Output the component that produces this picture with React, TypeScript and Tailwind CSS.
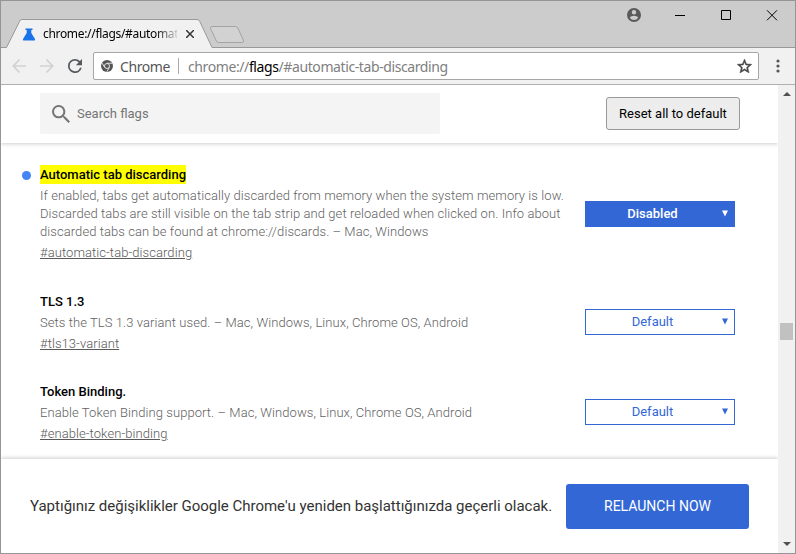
import React from "react";

type Flag = {
  title: string;
  text: string[];
  link: string;
  value: string;
  changed?: boolean;
};

const flags: Flag[] = [
  {
    title: "Automatic tab discarding",
    text: [
      "If enabled, tabs get automatically discarded from memory when the system memory is low.",
      "Discarded tabs are still visible on the tab strip and get reloaded when clicked on. Info about",
      "discarded tabs can be found at chrome://discards. – Mac, Windows",
    ],
    link: "#automatic-tab-discarding",
    value: "Disabled",
    changed: true,
  },
  {
    title: "TLS 1.3",
    text: ["Sets the TLS 1.3 variant used. – Mac, Windows, Linux, Chrome OS, Android"],
    link: "#tls13-variant",
    value: "Default",
  },
  {
    title: "Token Binding.",
    text: ["Enable Token Binding support. – Mac, Windows, Linux, Chrome OS, Android"],
    link: "#enable-token-binding",
    value: "Default",
  },
];

function TabStrip() {
  return (
    <div className="relative flex h-[47px] shrink-0 bg-[#cccccc] font-['Noto_Sans',sans-serif]">
      <svg className="absolute left-0 top-0" width="794" height="47" fill="none">
        <path d="M0 46.5H5.5L18.5 20.5Q19.2 18.5 21 18.5H196Q198 18.5 198.8 20.5L211 46.5H794V47H0Z" fill="#f1f1f1" />
        <path d="M0 46.5H5.5L18.5 20.5Q19.2 18.5 21 18.5H196Q198 18.5 198.8 20.5L211 46.5H794" stroke="#999" />
        <path d="M211 25.500H234.500Q236 25.500 236.800 27L242.500 39.500Q243 41.500 241 41.500H217.500Q216 41.500 215.400 40L209.500 27.500Q209 25.500 211 25.500Z" fill="#d2d2d2" stroke="#a3a3a3" />
      </svg>
      <div className="relative mt-[19px] flex h-[28px] w-[212px] items-center pl-[22px]">
        <svg width="12" height="13" viewBox="0 0 12 13" fill="#1a73e8">
          <path d="M2.500 0.500H9.500V2H8.300V5L12 11Q12.300 12.500 11 12.500H1Q-.3 12.500 0 11L3.700 5V2H2.500Z" />
        </svg>
        <span className="ml-[8px] w-[134px] whitespace-nowrap text-[12px] leading-4 tracking-[-0.32px] text-black [mask-image:linear-gradient(to_right,black_112px,transparent_138px)]">
          chrome://flags/#automat
        </span>
        <svg className="ml-[9px] shrink-0" width="8" height="8" viewBox="0 0 8 8" stroke="#333" strokeWidth="1.5">
          <path d="M0 0L8 8M8 0L0 8" />
        </svg>
      </div>
      <svg className="relative ml-[414px] mt-[7px] shrink-0" width="14" height="14" viewBox="2 2 20 20" fill="#5a5a5a">
        <path d="M12 2a10 10 0 1 0 0 20a10 10 0 0 0 0-20zm0 3a3.200 3.200 0 1 1 0 6.400a3.200 3.200 0 0 1 0-6.400zm0 14.200a7.200 7.200 0 0 1-6-3.220c.03-2 4-3.080 6-3.080s5.970 1.090 6 3.080a7.200 7.200 0 0 1-6 3.220z" />
      </svg>
      <svg className="relative ml-[34px] mt-[9px] shrink-0" width="104" height="12" fill="none" stroke="#000">
        <path d="M0 5.500H10M46.500 .5H55.500V9.500H46.500ZM92 .3L102 10.300M102 .3L92 10.300" />
      </svg>
    </div>
  );
}

function Toolbar() {
  return (
    <div className="flex h-[37px] shrink-0 items-center border-b border-[#b0b0b0] bg-[#f1f1f1] font-['Noto_Sans',sans-serif]">
      <svg className="ml-[11px]" width="42" height="16" fill="none" stroke="#d2d2d2" strokeWidth="1.700">
        <path d="M14 8H1.500M7.500 1.500L1.300 8L7.500 14.500M28 8H40.500M34.500 1.500L40.700 8L34.500 14.500" />
      </svg>
      <svg className="ml-[14px]" width="14" height="14" viewBox="4 4 16 16" fill="#555a5f">
        <path d="M17.650 6.350A7.960 7.960 0 0 0 12 4a8 8 0 1 0 7.730 10h-2.080A6 6 0 1 1 12 6c1.660 0 3.140.69 4.220 1.780L13 11h7V4z" />
      </svg>
      <div className="ml-[11px] flex h-[28px] w-[666px] items-center rounded-[2px] border border-[#a6a6a6] bg-white text-[14px]">
        <svg className="ml-[7px]" width="12" height="12" viewBox="0 0 24 24">
          <circle cx="12" cy="12" r="12" fill="#555" />
          <circle cx="12" cy="12" r="5" fill="#555" stroke="#fff" strokeWidth="1.600" />
          <path d="M12 6.500H22.500M7.200 14.800L2 5.700M16.800 14.800L11.600 23.500" stroke="#fff" strokeWidth="1.600" />
        </svg>
        <span className="ml-[7px] w-[49px] whitespace-nowrap tracking-[-0.4px] text-[#555]">Chrome</span>
        <span className="ml-[9px] h-[16px] w-px bg-[#aaa]" />
        <span className="ml-[9px] whitespace-nowrap tracking-[-0.4px] text-[#808080]">
          chrome://<span className="text-black">flags</span>/#automatic-tab-discarding
        </span>
        <svg className="ml-auto mr-[6px]" width="15" height="14" viewBox="2 2 20 19" fill="#444" stroke="#444" strokeWidth=".6">
          <path d="M22 9.240l-7.190-.62L12 2 9.190 8.630 2 9.240l5.460 4.730L5.820 21 12 17.270 18.180 21l-1.630-7.030L22 9.240zM12 15.400l-3.760 2.270 1-4.280-3.320-2.880 4.380-.38L12 6.100l1.710 4.040 4.380.38-3.320 2.880 1 4.280L12 15.400z" />
        </svg>
      </div>
      <svg className="ml-[17px]" width="4" height="14" fill="#555">
        <circle cx="2" cy="2" r="1.600" />
        <circle cx="2" cy="7" r="1.600" />
        <circle cx="2" cy="12" r="1.600" />
      </svg>
    </div>
  );
}

function FlagRow({ flag }: { flag: Flag }) {
  const first = !!flag.changed;
  return (
    <div className={first ? "mb-[30px] flex items-center" : "mb-[29px] flex items-center"}>
      <div className="w-[545px] shrink-0">
        <div className="flex h-[19px] items-center">
          {first && <span className="-ml-[18px] mr-[9px] mt-[2px] size-[9px] rounded-full bg-[#4285f4]" />}
          <span
            className={
              first
                ? "h-[19px] bg-[#ffff00] text-[13px] font-medium leading-[19px] text-black"
                : "text-[13px] font-medium leading-[19px] text-black"
            }
          >
            {flag.title}
          </span>
        </div>
        <div className="mt-[3px] whitespace-nowrap text-[13px] font-light leading-[18px] tracking-[0.075px] text-[#5f5f5f]">
          {flag.text.map((line) => (
            <div key={line}>{line}</div>
          ))}
        </div>
        <div className="mt-[3px] text-[13px] font-light leading-[18px] tracking-[0.075px] text-[#5a5a5a] underline">
          {flag.link}
        </div>
      </div>
      <div
        className={
          first
            ? "mt-px flex h-[26px] w-[150px] items-center border border-[#3367d6] bg-[#3367d6] text-[13px] font-medium text-white"
            : "-mt-px flex h-[26px] w-[150px] items-center border border-[#3367d6] bg-white text-[13px] text-[#3367d6]"
        }
      >
        <span className="ml-[14px] w-[105px] text-center">{flag.value}</span>
        <svg className="ml-[17px] -mt-px" width="6" height="7" fill="currentColor">
          <path d="M0 .5H6L3 6.500Z" />
        </svg>
      </div>
    </div>
  );
}

function Scrollbar() {
  return (
    <div className="flex w-[17px] shrink-0 flex-col items-center bg-[#f1f1f1]">
      <svg className="mt-[7px]" width="8" height="4" fill="#505050">
        <path d="M4 0L8 4H0Z" />
      </svg>
      <div className="mt-[227px] h-[17px] w-[13px] bg-[#c1c1c1]" />
      <svg className="mb-[7px] mt-auto" width="8" height="4" fill="#505050">
        <path d="M4 4L8 0H0Z" />
      </svg>
    </div>
  );
}

export default function App() {
  return (
    <div className="flex h-[554px] w-[796px] flex-col overflow-hidden border border-[#959595] bg-white font-[Roboto,sans-serif]">
      <TabStrip />
      <Toolbar />
      <div className="flex min-h-0 flex-1">
        <div className="flex min-w-0 flex-1 flex-col overflow-hidden">
          <div className="flex h-[58px] shrink-0 items-start pl-[39px] pt-[8px] shadow-[0_1px_4px_rgba(0,0,0,0.2)]">
            <div className="flex h-[41px] w-[400px] items-center rounded-[2px] bg-[#f4f4f4]">
              <svg className="ml-[12px]" width="18" height="18" viewBox="3 3 17.500 17.500" fill="#757575">
                <path d="M15.500 14h-.79l-.28-.27A6.470 6.470 0 0 0 16 9.500 6.500 6.500 0 1 0 9.500 16c1.610 0 3.090-.59 4.230-1.570l.27.280v.79l5 4.990L20.490 19l-4.990-5zm-6 0C7.010 14 5 11.990 5 9.500S7.010 5 9.500 5 14 7.010 14 9.500 11.990 14 9.500 14z" />
              </svg>
              <span className="ml-[7px] text-[13px] text-[#757575]">Search flags</span>
            </div>
            <div className="ml-[166px] mt-[4px] flex h-[33px] w-[134px] items-center justify-center rounded-[3px] border border-[#999] bg-[#ededed] text-[13px] text-black">
              Reset all to default
            </div>
          </div>
          <div className="h-[316px] shrink-0 pl-[39px] pt-[22px]">
            {flags.map((flag) => (
              <FlagRow key={flag.title} flag={flag} />
            ))}
          </div>
          <div className="relative flex flex-1 items-center bg-white pl-[29px] shadow-[0_-1px_4px_rgba(0,0,0,0.2)]">
            <span className="w-[536px] whitespace-nowrap text-[15px] tracking-[-0.01px] text-[#333]">
              Yaptığınız değişiklikler Google Chrome'u yeniden başlattığınızda geçerli olacak.
            </span>
            <div className="flex h-[45px] w-[183px] items-center justify-center rounded-[3px] bg-[#3367d6] text-[14px] text-white">
              RELAUNCH NOW
            </div>
          </div>
        </div>
        <Scrollbar />
      </div>
    </div>
  );
}
